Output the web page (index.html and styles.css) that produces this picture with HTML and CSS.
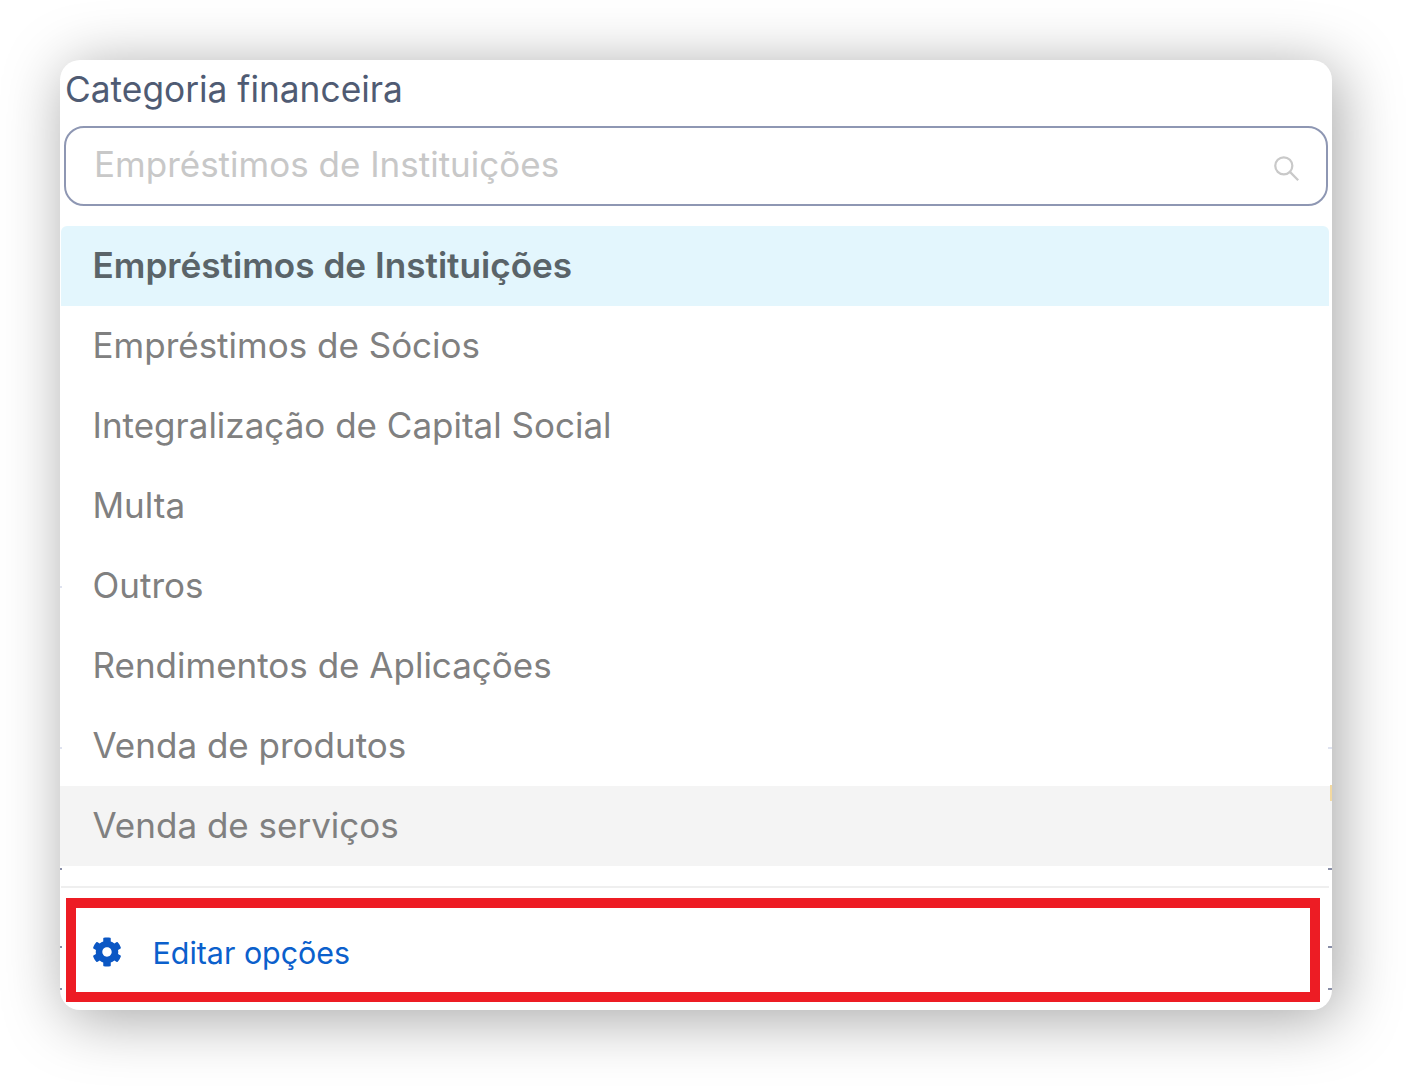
FILE: index.html
```html
<!DOCTYPE html>
<html lang="pt-BR">
<head>
<meta charset="utf-8">
<title>Categoria financeira</title>
<link rel="stylesheet" href="styles.css">
</head>
<body>
<main class="card">
  <span class="tick tick-l t1"></span><span class="tick tick-l t2"></span><span class="tick tick-l t3"></span>
  <span class="tick tick-r t1"></span><span class="tick tick-r t2"></span><span class="tick tick-r t3"></span>
  <span class="tick tick-l tick-light t4"></span><span class="tick tick-l tick-light t5"></span>
  <span class="tick tick-r tick-light t5"></span><span class="tick-yellow"></span>
  <label class="label">Categoria financeira</label>
  <div class="search">
    <span class="placeholder">Empréstimos de Instituições</span>
    <svg class="search-icon" viewBox="0 0 30 30" fill="none" stroke="#c9c9c9" stroke-width="2.5" aria-hidden="true">
      <circle cx="12" cy="12" r="9.5"/>
      <path d="M18.8 18.8 L28 28"/>
    </svg>
  </div>
  <ul class="list">
    <li class="item item-active"><span class="item-text">Empréstimos de Instituições</span></li>
    <li class="item"><span class="item-text">Empréstimos de Sócios</span></li>
    <li class="item"><span class="item-text">Integralização de Capital Social</span></li>
    <li class="item"><span class="item-text">Multa</span></li>
    <li class="item"><span class="item-text">Outros</span></li>
    <li class="item"><span class="item-text">Rendimentos de Aplicações</span></li>
    <li class="item"><span class="item-text">Venda de produtos</span></li>
    <li class="item item-hover"><span class="item-text">Venda de serviços</span></li>
  </ul>
  <div class="footer">
    <div class="edit">
      <svg class="gear" viewBox="0 0 512 512" fill="#0b57c4" aria-hidden="true">
        <path d="M487.4 315.7l-42.6-24.6c4.3-23.2 4.3-47 0-70.2l42.6-24.6c4.9-2.8 7.1-8.6 5.5-14-11.1-35.6-30-67.8-54.7-94.6-3.8-4.1-10-5.1-14.8-2.3L380.8 110c-17.9-15.4-38.5-27.3-60.8-35.1V25.8c0-5.6-3.9-10.5-9.4-11.7-36.7-8.2-74.3-7.8-109.2 0-5.5 1.2-9.4 6.1-9.4 11.7V75c-22.2 7.9-42.8 19.8-60.8 35.1L88.7 85.5c-4.9-2.8-11-1.9-14.8 2.3-24.7 26.7-43.6 58.9-54.7 94.6-1.7 5.4.6 11.2 5.5 14L67.3 221c-4.3 23.2-4.3 47 0 70.2l-42.6 24.6c-4.9 2.8-7.1 8.6-5.5 14 11.1 35.6 30 67.8 54.7 94.6 3.8 4.1 10 5.1 14.8 2.3l42.6-24.6c17.9 15.4 38.5 27.3 60.8 35.1v49.2c0 5.6 3.9 10.5 9.4 11.7 36.7 8.2 74.3 7.8 109.2 0 5.5-1.2 9.4-6.1 9.4-11.7v-49.2c22.2-7.9 42.8-19.8 60.8-35.1l42.6 24.6c4.9 2.8 11 1.9 14.8-2.3 24.7-26.7 43.6-58.9 54.7-94.6 1.5-5.5-.7-11.3-5.6-14.1zM256 336c-44.1 0-80-35.9-80-80s35.9-80 80-80 80 35.9 80 80-35.9 80-80 80z"/>
      </svg>
      <span class="edit-text">Editar opções</span>
    </div>
  </div>
</main>
</body>
</html>
```

FILE: styles.css
```css
* { box-sizing: border-box; }
html, body { margin: 0; height: 1090px; background: #fff; overflow: hidden; }
body { padding: 60px 80px 80px 60px; font-family: Inter, "Noto Sans", sans-serif; }

.card {
  position: relative;
  width: 1272px;
  height: 950px;
  background: #fff;
  border-radius: 20px;
  box-shadow: 6px 8px 62px rgba(0, 0, 0, .36);
  display: flex;
  flex-direction: column;
  overflow: hidden;
}

.label {
  display: block;
  height: 66px;
  padding: 10px 0 0 5px;
  font-size: 35.3px;
  line-height: 40px;
  color: #4f5b73;
}

.search {
  margin: 0 4px 0 4px;
  height: 80px;
  border: 2px solid #8e97b3;
  border-radius: 20px;
  display: flex;
  align-items: center;
  justify-content: space-between;
  padding: 0 26px 0 28px;
}
.placeholder { font-size: 35px; line-height: 40px; color: #c8c8c8; margin-top: -4px; }
.search-icon { width: 27px; height: 27px; margin-top: 5px; }

.list { list-style: none; margin: 20px 0 0; padding: 0; }
.item {
  height: 80px;
  margin: 0 3px 0 1px;
  padding-left: 31.5px;
  display: flex;
  align-items: center;
  font-size: 35px;
  color: #808080;
}
.item-text { margin-top: -2px; }
.item-active { background: #e3f6fd; color: #5a6469; font-weight: 600; font-size: 35.15px; border-radius: 6px 6px 0 0; }
.item-hover { background: #f4f4f4; margin: 0; padding-left: 32.5px; }

.footer {
  margin: 20px 3px 0 1px;
  border-top: 2px solid #efefef;
  padding: 10px 9px 0 5px;
}
.edit {
  height: 104px;
  border: 10px solid #ed1c24;
  display: flex;
  align-items: center;
  padding-left: 16px;
}
.gear { width: 30px; height: 30px; flex: none; margin-top: 3px; }
.edit-text { margin-left: 30.5px; margin-top: 5px; font-size: 30.4px; color: #0b60cc; }

.tick { position: absolute; height: 2px; width: 4px; background: #8a8fa8; }
.tick-l { left: 0; width: 2px; }
.tick-r { right: 0; }
.tick-light { background: #dfe3f0; }
.t1 { top: 808px; }
.t2 { top: 886px; }
.t3 { top: 928px; }
.t4 { top: 526px; }
.t5 { top: 687px; }
.tick-yellow { position: absolute; right: 0; top: 725px; width: 2px; height: 16px; background: #f3d9a0; }
```
